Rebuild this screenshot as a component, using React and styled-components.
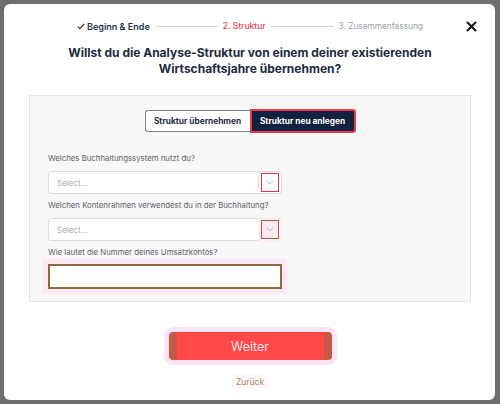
import React, { useState } from 'react';
import styled, { createGlobalStyle } from 'styled-components';

const GlobalStyle = createGlobalStyle`
  html, body {
    margin: 0;
    padding: 0;
    background: #6e6e6e;
    font-family: "Inter", "Noto Sans", sans-serif;
  }
`

const Backdrop = styled.div`
  width: 500px;
  height: 404px;
  padding: 4px 5px 4px 4px;
  box-sizing: border-box;
`

const Modal = styled.div`
  position: relative;
  height: 100%;
  background: #ffffff;
  border-radius: 6px;
  padding: 16px 24px 0 25px;
  box-sizing: border-box;
  display: flex;
  flex-direction: column;
  align-items: center;
`

const CloseButton = styled.button`
  position: absolute;
  top: 14px;
  right: 16px;
  width: 16px;
  height: 16px;
  padding: 0;
  border: none;
  background: none;
  cursor: pointer;
  display: flex;
  align-items: center;
  justify-content: center;
`

const Stepper = styled.div`
  display: flex;
  align-items: center;
  gap: 5px;
  height: 12px;
`

const Step = styled.span`
  font-size: ${p => (p.$state === 'done' ? '9px' : p.$state === 'active' ? '8.5px' : '8.3px')};
  font-weight: ${p => (p.$state === 'todo' ? 400 : p.$state === 'active' ? 500 : 600)};
  color: ${p => (p.$state === 'active' ? '#f0434f' : p.$state === 'done' ? '#24324a' : '#9aa0a8')};
  white-space: nowrap;
  display: flex;
  align-items: center;
  gap: 2px;
`

const StepLine = styled.span`
  width: 63px;
  height: 1px;
  background: #cfd5dc;
`

const Title = styled.h2`
  margin: 13px 0 0;
  font-size: 12px;
  line-height: 16px;
  font-weight: 700;
  color: #1c2b42;
  text-align: center;
`

const Panel = styled.div`
  align-self: stretch;
  margin-top: 18px;
  background: #f8f8f8;
  border: 1px solid #e4e4e4;
  padding: 13px 18px 12px;
  display: flex;
  flex-direction: column;
`

const Toggle = styled.div`
  display: flex;
  justify-content: center;
  margin-bottom: 20px;
`

const ToggleButton = styled.button`
  font-family: inherit;
  font-size: 8.3px;
  font-weight: 700;
  width: ${p => (p.$active ? '106px' : '105px')};
  padding: 0;
  cursor: pointer;
  background: ${p => (p.$active ? '#13223e' : '#ffffff')};
  color: ${p => (p.$active ? '#ffffff' : '#1f2b45')};
  border: ${p => (p.$active ? '2px solid #f2384c' : '1px solid #7b8290')};
  border-right: ${p => (p.$active ? '2px solid #f2384c' : 'none')};
  border-radius: ${p => (p.$active ? '0 3px 3px 0' : '3px 0 0 3px')};
  margin-top: ${p => (p.$active ? '0' : '1px')};
  height: ${p => (p.$active ? '24px' : '22px')};
`

const Field = styled.div`
  display: flex;
  flex-direction: column;
  width: 234px;
  margin-bottom: ${p => (p.$last ? '0' : '6px')};
`

const Label = styled.label`
  font-size: 7.8px;
  color: #5d6068;
  line-height: 10px;
  margin-bottom: ${p => (p.$tight ? '7px' : '8px')};
  white-space: nowrap;
`

const SelectBox = styled.div`
  height: 23px;
  background: #ffffff;
  border: 1px solid #dcdcdc;
  border-radius: 3px;
  display: flex;
  align-items: center;
  box-sizing: border-box;
  padding-left: 8px;
`

const Placeholder = styled.span`
  flex: 1;
  font-size: 8px;
  color: #a9abb0;
`

const Separator = styled.span`
  width: 1px;
  height: 13px;
  background: #dcdcdc;
  margin-right: 2px;
`

const ChevronBox = styled.span`
  width: 18px;
  height: 19px;
  margin-right: 2px;
  box-sizing: border-box;
  border: 1.5px solid ${p => (p.$tone === 'red' ? '#ee3046' : '#8e6a3c')};
  background: ${p => (p.$tone === 'red' ? '#ffffff' : '#fde9f3')};
  display: flex;
  align-items: center;
  justify-content: center;
  box-shadow: ${p => (p.$tone === 'red' ? 'none' : '0 0 0 3px #fdeef6')};
`

const TextInput = styled.input`
  height: 25px;
  box-sizing: border-box;
  border: 2px solid #8e6a3c;
  background: #ffffff;
  outline: none;
  box-shadow: 0 0 0 5px #fdeaf4;
  font-family: inherit;
  font-size: 9px;
`

const Actions = styled.div`
  display: flex;
  flex-direction: column;
  align-items: center;
  margin-top: 30px;
  gap: 15px;
`

const PrimaryButton = styled.button`
  width: 163px;
  height: 28px;
  border: none;
  border-radius: 4px;
  cursor: pointer;
  font-family: inherit;
  font-size: 12.5px;
  font-weight: 400;
  color: #ffe3ea;
  background: linear-gradient(to right, #c45a45 0 8px, #ff4848 8px calc(100% - 8px), #c45a45 calc(100% - 8px));
  box-shadow: 0 0 0 5px #fde3f6;
`

const BackLink = styled.a`
  font-size: 8.5px;
  color: #b07e6c;
  background: #fdf7f7;
  padding: 2px 4px;
  cursor: pointer;
`

const Chevron = () => (
  <svg width="8" height="5" viewBox="0 0 8 5" fill="none">
    <path d="M1 1l3 3 3-3" stroke="#b5b5bb" strokeWidth="1" />
  </svg>
)

const SelectField = ({ label, tone }) => (
  <Field>
    <Label>{label}</Label>
    <SelectBox>
      <Placeholder>Select...</Placeholder>
      <Separator />
      <ChevronBox $tone={tone}><Chevron /></ChevronBox>
    </SelectBox>
  </Field>
)

export default function App() {
  const [mode, setMode] = useState('new');

  return (
    <Backdrop>
      <GlobalStyle />
      <Modal>
        <CloseButton aria-label="Schließen">
          <svg width="11" height="11" viewBox="0 0 11 11">
            <path d="M1.5 1.5l8 8M9.5 1.5l-8 8" stroke="#111" strokeWidth="2" strokeLinecap="round" />
          </svg>
        </CloseButton>

        <Stepper>
          <Step $state="done">
            <svg width="8" height="7" viewBox="0 0 8 7" fill="none">
              <path d="M0.8 3.6l2 2 4.4-4.6" stroke="#24324a" strokeWidth="1.1" />
            </svg>
            Beginn &amp; Ende
          </Step>
          <StepLine />
          <Step $state="active">2. Struktur</Step>
          <StepLine />
          <Step $state="todo">3. Zusammenfassung</Step>
        </Stepper>

        <Title>
          Willst du die Analyse-Struktur von einem deiner existierenden
          <br />
          Wirtschaftsjahre übernehmen?
        </Title>

        <Panel>
          <Toggle>
            <ToggleButton $active={mode === 'copy'} onClick={() => setMode('copy')}>Struktur übernehmen</ToggleButton>
            <ToggleButton $active={mode === 'new'} onClick={() => setMode('new')}>Struktur neu anlegen</ToggleButton>
          </Toggle>

          <SelectField label="Welches Buchhaltungssystem nutzt du?" tone="red" />
          <SelectField label="Welchen Kontenrahmen verwendest du in der Buchhaltung?" tone="brown" />
          <Field $last>
            <Label $tight>Wie lautet die Nummer deines Umsatzkontos?</Label>
            <TextInput />
          </Field>
        </Panel>

        <Actions>
          <PrimaryButton>Weiter</PrimaryButton>
          <BackLink>Zurück</BackLink>
        </Actions>
      </Modal>
    </Backdrop>
  );
}
